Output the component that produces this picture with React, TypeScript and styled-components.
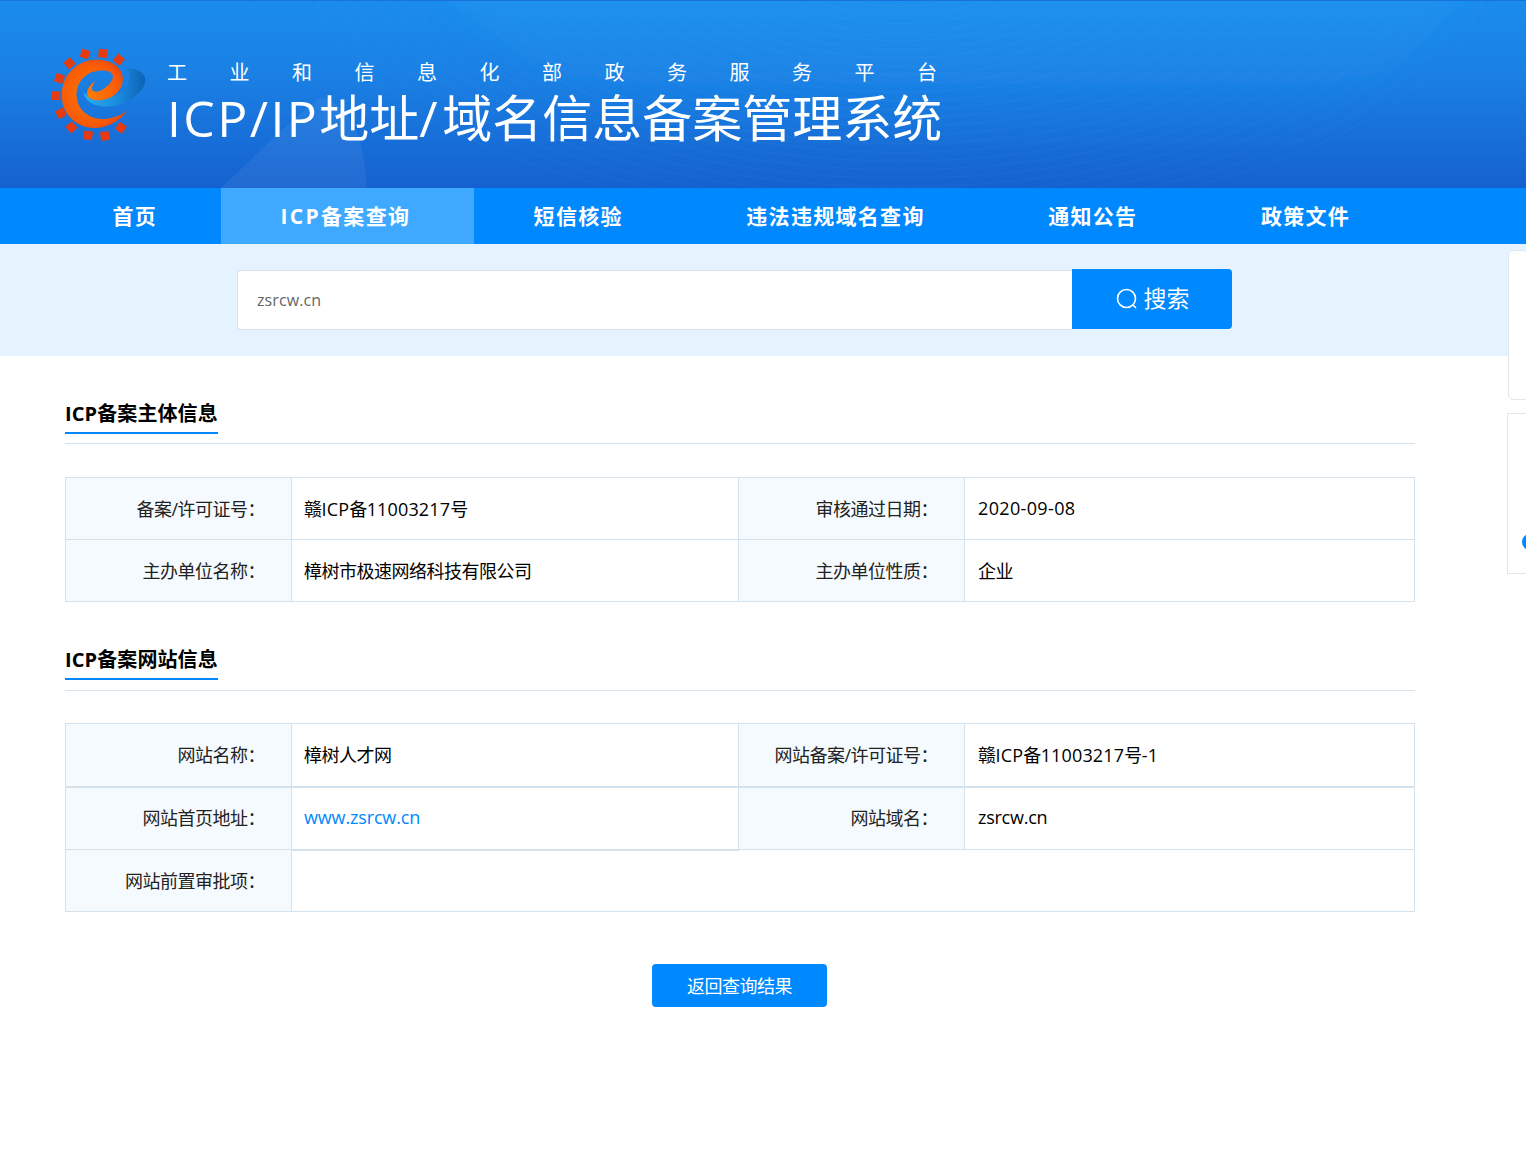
import * as React from "react"
import styled, { createGlobalStyle } from "styled-components"

const CJK = `"Open Sans", "Noto Sans CJK SC", sans-serif`

const GlobalStyle = createGlobalStyle`
  html, body {
    margin: 0;
    padding: 0;
    background: #fff;
    font-family: ${CJK};
  }
  * { box-sizing: border-box; }
`

const Page = styled.div`
  position: relative;
  width: 1526px;
  height: 1175px;
  overflow: hidden;
`

const Header = styled.header`
  position: relative;
  height: 188px;
  padding: 47px 0 0 50px;
  display: flex;
  gap: 20px;
  overflow: hidden;
  border-top: 1px solid #1c6fde;
  background: linear-gradient(180deg, #1a8cec 0%, #1a80e4 40%, #1561cf 100%);
`

const HeaderArt = styled.svg`
  position: absolute;
  left: 0;
  top: 0;
`

const Logo = styled.svg`
  position: relative;
  flex: none;
  width: 97px;
  height: 95px;
`

const Titles = styled.div`
  position: relative;
  width: 774px;
  padding-top: 12px;
  color: #fff;
`

const SubTitle = styled.div`
  display: flex;
  justify-content: space-between;
  width: 770px;
  font-size: 20px;
  line-height: 26px;
`

const MainTitle = styled.h1`
  margin: 0;
  padding-top: 1px;
  font-size: 50px;
  line-height: 62px;
  font-weight: 400;
  white-space: nowrap;
`

const TitleLatin = styled.span<{ $spacing: number }>`
  letter-spacing: ${p => p.$spacing}px;
`

const Nav = styled.nav`
  display: flex;
  height: 56px;
  padding-left: 52.5px;
  background: #0088ff;
`

const NavItem = styled.a<{ $active?: boolean }>`
  display: flex;
  align-items: center;
  flex: none;
  height: 56px;
  width: ${p => (p.$active ? "253px" : "auto")};
  padding: 0 60px 2px;
  margin-right: ${p => (p.$active ? 0 : 3.5)}px;
  color: #fff;
  font-size: 21px;
  font-weight: 700;
  letter-spacing: 1.3px;
  white-space: nowrap;
  background: ${p => (p.$active ? "#3fa9ff" : "transparent")};
`

const NavLatin = styled.span`
  letter-spacing: 2.3px;
`

const SearchBand = styled.div`
  display: flex;
  align-items: flex-start;
  height: 112px;
  padding: 25px 0 0 237px;
  background: #e5f2ff;
`

const SearchInput = styled.div`
  display: flex;
  align-items: center;
  width: 835px;
  height: 60px;
  margin-top: 1px;
  padding-left: 19px;
  background: #fff;
  border: 1px solid #dcdfe6;
  border-right: 0;
  border-radius: 4px 0 0 4px;
  color: #666;
  font-size: 16px;
  letter-spacing: 0.1px;
`

const SearchButton = styled.div`
  display: flex;
  align-items: center;
  justify-content: center;
  gap: 6px;
  width: 160px;
  height: 60px;
  padding: 0 0 1px 1px;
  background: #0088ff;
  border-radius: 0 4px 4px 0;
  color: #fff;
  font-family: "Noto Sans CJK SC", sans-serif;
  font-size: 23px;
`

const SearchLabel = styled.span`
  margin-bottom: 4px;
`

const SideCard = styled.div<{ $top: number; $height: number; $left: number; $radius: number }>`
  position: absolute;
  top: ${p => p.$top}px;
  left: ${p => p.$left}px;
  width: 40px;
  height: ${p => p.$height}px;
  background: #fff;
  border: 1px solid #e3e6ea;
  border-radius: ${p => p.$radius}px;
`

const SideDot = styled.span`
  position: absolute;
  left: 14px;
  top: 120px;
  width: 16px;
  height: 16px;
  border-radius: 50%;
  background: #0088ff;
`

const Content = styled.main`
  width: 1350px;
  margin-left: 65px;
`

const SectionHead = styled.div<{ $height: number }>`
  margin-top: 46px;
  height: ${p => p.$height}px;
  border-bottom: 1px solid #d3e2ec;
`

const SectionTitle = styled.h2`
  display: inline-block;
  margin: 0;
  height: 32px;
  font-size: 20px;
  line-height: 24px;
  font-weight: 700;
  color: #000;
  letter-spacing: 0.1px;
  white-space: nowrap;
  border-bottom: 2px solid #0088ff;
`

const Table = styled.table<{ $top: number }>`
  width: 1349px;
  margin-top: ${p => p.$top}px;
  table-layout: fixed;
  border-collapse: collapse;
  font-size: 18px;
  letter-spacing: -0.5px;
  color: #000;
`

const Row = styled.tr<{ $height: number; $thick?: boolean }>`
  height: ${p => p.$height}px;

  td {
    border-bottom-width: ${p => (p.$thick ? 2 : 1)}px;
  }
`

const Label = styled.td`
  padding: 0 26px 2px 0;
  text-align: right;
  color: #222;
  background: #f5fafe;
  border: 1px solid #d3e2ec;
`

const Value = styled.td<{ $thick?: boolean }>`
  padding: 0 0 2px 12px;
  background: #fff;
  border: 1px solid #d3e2ec;
  ${p => (p.$thick ? "border-bottom-width: 2px !important;" : "")}

  &:last-child {
    padding-left: 13px;
  }
`

const Latin = styled.span<{ $spacing?: number }>`
  letter-spacing: ${p => p.$spacing ?? 0.15}px;
`

const SiteLink = styled.a`
  color: #0088ff;
  letter-spacing: -0.15px;
`

const BackButton = styled.div`
  display: flex;
  align-items: center;
  justify-content: center;
  width: 175px;
  height: 43px;
  margin: 52px 0 0 587px;
  padding-bottom: 2px;
  background: #0088ff;
  border-radius: 4px;
  color: #fff;
  font-size: 18px;
  letter-spacing: -0.5px;
`

const navItems = ["首页", "ICP备案查询", "短信核验", "违法违规域名查询", "通知公告", "政策文件"]
const subTitle = "工业和信息化部政务服务平台".split("")

const arcs = Array.from({ length: 30 }, (_, i) => 1 - i * 0.033)
const gearSquares = [
  [165, 73, 20], [218, 71, 5], [266, 90, 40], [118, 101, -40], [88, 146, 20], [77, 198, 0],
  [92, 251, -25], [124, 293, -40], [174, 317, 8], [224, 319, -8], [272, 294, 35],
]

const HeaderBackdrop = () => (
  <HeaderArt width="1526" height="188" viewBox="0 0 1526 188">
    <defs>
      <linearGradient id="band" x1="0" y1="0" x2="0" y2="1">
        <stop offset="0" stopColor="#2aa6f8" stopOpacity="0.22" />
        <stop offset="0.8" stopColor="#2aa6f8" stopOpacity="0" />
      </linearGradient>
      <filter id="soft" x="-5%" y="-20%" width="110%" height="140%">
        <feGaussianBlur stdDeviation="14" />
      </filter>
    </defs>
    <path d="M420 -30 C 500 60, 640 110, 730 188 L 1180 188 C 1300 140, 1420 70, 1480 -30 Z" fill="url(#band)" filter="url(#soft)" />
    <path d="M220 188 C 250 160, 300 110, 320 97 C 345 100, 365 130, 367 188 Z" fill="#fff" opacity="0.06" />
    <g fill="none" stroke="#9ad2fb" strokeOpacity="0.05" strokeWidth="1">
      {arcs.map(s => (
        <ellipse key={s} cx="900" cy="-40" rx={590 * s} ry={260 * s} />
      ))}
    </g>
  </HeaderArt>
)

const LogoMark = () => (
  <Logo viewBox="60 55 290 285">
    <defs>
      <linearGradient id="swirl" x1="0" y1="0" x2="1" y2="0">
        <stop offset="0" stopColor="#2ab0f0" />
        <stop offset="0.55" stopColor="#1a8be0" />
        <stop offset="1" stopColor="#0f62b4" />
      </linearGradient>
      <radialGradient id="ring" cx="0.45" cy="0.5" r="0.6">
        <stop offset="0" stopColor="#ff7a00" />
        <stop offset="0.75" stopColor="#f85a08" />
        <stop offset="1" stopColor="#e8400c" />
      </radialGradient>
    </defs>
    {gearSquares.map(([x, y, a]) => (
      <rect key={`${x}-${y}`} x={x - 13} y={y - 13} width="26" height="26" fill="#e63a10" transform={`rotate(${a} ${x} ${y})`} />
    ))}
    <path
      d="M160 188 C 165 225, 215 240, 265 225 C 310 210, 346 180, 345 150 C 344 128, 318 114, 285 117 C 300 125, 305 145, 290 170 C 265 205, 190 225, 160 188 Z"
      fill="url(#swirl)"
    />
    <path
      d="M292 243 C 260 285, 205 305, 160 290 C 115 272, 92 235, 95 190 C 98 135, 140 92, 195 90 C 245 88, 280 115, 278 150 C 276 185, 245 210, 205 212 C 180 212, 165 200, 172 182 C 176 170, 185 160, 195 155 C 185 170, 182 180, 190 185 C 205 192, 240 170, 248 145 C 252 125, 225 118, 195 125 C 160 133, 135 165, 140 205 C 145 245, 180 270, 225 268 C 250 265, 275 255, 292 243 Z"
      fill="url(#ring)"
    />
  </Logo>
)

const SearchIcon = () => (
  <svg width="22" height="22" viewBox="0 0 22 22" fill="none" stroke="#fff" strokeWidth="1.6">
    <circle cx="10.5" cy="10.5" r="9" />
    <path d="M17 17 L20 20" />
  </svg>
)

const Columns = () => (
  <colgroup>
    <col width="226" />
    <col width="447" />
    <col width="226" />
    <col width="450" />
  </colgroup>
)

const App = () => (
  <Page>
    <GlobalStyle />
    <Header>
      <HeaderBackdrop />
      <LogoMark />
      <Titles>
        <SubTitle>
          {subTitle.map((c, i) => (
            <span key={i}>{c}</span>
          ))}
        </SubTitle>
        <MainTitle>
          <TitleLatin $spacing={2.4}>ICP/IP</TitleLatin>地址<TitleLatin $spacing={4.5}>/</TitleLatin>域名信息备案管理系统
        </MainTitle>
      </Titles>
    </Header>
    <Nav>
      {navItems.map(item => (
        <NavItem key={item} $active={item === "ICP备案查询"}>
          {item === "ICP备案查询" ? (
            <span>
              <NavLatin>ICP</NavLatin>备案查询
            </span>
          ) : (
            item
          )}
        </NavItem>
      ))}
    </Nav>
    <SearchBand>
      <SearchInput>zsrcw.cn</SearchInput>
      <SearchButton>
        <SearchIcon />
        <SearchLabel>搜索</SearchLabel>
      </SearchButton>
    </SearchBand>
    <SideCard $top={250} $left={1508} $height={150} $radius={5} />
    <SideCard $top={413} $left={1507} $height={161} $radius={0}>
      <SideDot />
    </SideCard>
    <Content>
      <SectionHead $height={42}>
        <SectionTitle>ICP备案主体信息</SectionTitle>
      </SectionHead>
      <Table $top={33}>
        <Columns />
        <tbody>
          <Row $height={62}>
            <Label>备案/许可证号：</Label>
            <Value>
              赣<Latin>ICP</Latin>备<Latin>11003217</Latin>号
            </Value>
            <Label>审核通过日期：</Label>
            <Value>
              <Latin $spacing={0.35}>2020-09-08</Latin>
            </Value>
          </Row>
          <Row $height={62}>
            <Label>主办单位名称：</Label>
            <Value>樟树市极速网络科技有限公司</Value>
            <Label>主办单位性质：</Label>
            <Value>企业</Value>
          </Row>
        </tbody>
      </Table>
      <SectionHead $height={43}>
        <SectionTitle>ICP备案网站信息</SectionTitle>
      </SectionHead>
      <Table $top={32}>
        <Columns />
        <tbody>
          <Row $height={63} $thick>
            <Label>网站名称：</Label>
            <Value>樟树人才网</Value>
            <Label>网站备案/许可证号：</Label>
            <Value>
              赣<Latin>ICP</Latin>备<Latin>11003217</Latin>号<Latin>-1</Latin>
            </Value>
          </Row>
          <Row $height={63}>
            <Label>网站首页地址：</Label>
            <Value $thick>
              <SiteLink>www.zsrcw.cn</SiteLink>
            </Value>
            <Label>网站域名：</Label>
            <Value>
              <Latin $spacing={-0.25}>zsrcw.cn</Latin>
            </Value>
          </Row>
          <Row $height={62}>
            <Label>网站前置审批项：</Label>
            <Value colSpan={3} />
          </Row>
        </tbody>
      </Table>
      <BackButton>返回查询结果</BackButton>
    </Content>
  </Page>
)

export default App
